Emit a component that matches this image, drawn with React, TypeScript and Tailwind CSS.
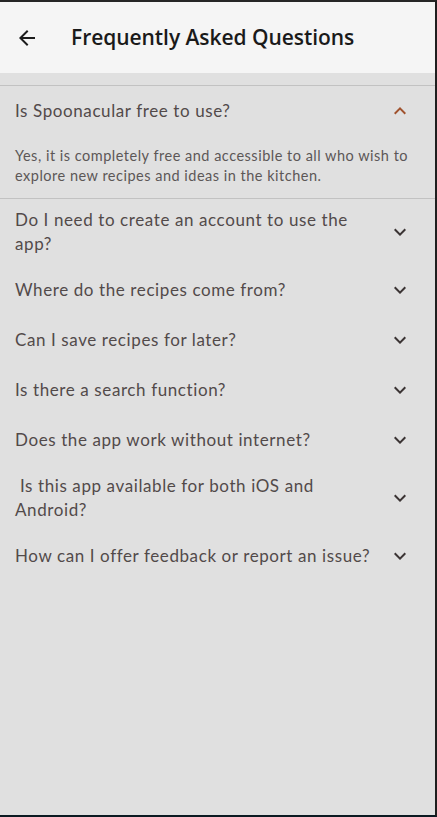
import React from "react";

const ExpandMore = ({ color = "#3b3434" }: { color?: string }) => (
  <svg width="24" height="24" viewBox="0 0 24 24" fill={color}>
    <path d="M16.59 8.59L12 13.17 7.41 8.59 6 10l6 6 6-6z" />
  </svg>
);

const ExpandLess = ({ color = "#a0522d" }: { color?: string }) => (
  <svg width="24" height="24" viewBox="0 0 24 24" fill={color}>
    <path d="M12 8l-6 6 1.41 1.41L12 10.83l4.59 4.58L18 14z" />
  </svg>
);

const questions = [
  "Do I need to create an account to use the app?",
  "Where do the recipes come from?",
  "Can I save recipes for later?",
  "Is there a search function?",
  "Does the app work without internet?",
  "\u00A0Is this app available for both iOS and Android?",
  "How can I offer feedback or report an issue?",
];

export default function App() {
  const body = { fontFamily: "Lato, 'Open Sans', sans-serif" };
  return (
    <div className="w-[437px] h-[817px] flex flex-col border-t-2 border-t-[#262626] border-r-2 border-r-[#1f1f1f] border-b-2 border-b-[#0b1a22] bg-[#e0e0e0] overflow-hidden">
      <div className="h-[71px] shrink-0 bg-[#f5f5f5] flex items-center pl-[15px]">
        <svg width="24" height="24" viewBox="0 0 24 24" fill="#1c1c1c">
          <path d="M20 11H7.83l5.59-5.59L12 4l-8 8 8 8 1.41-1.41L7.83 13H20v-2z" />
        </svg>
        <div
          className="ml-[32px] text-[21px] font-semibold text-[#1a1a1a] tracking-[-0.05px]"
          style={{ fontFamily: "'Open Sans', sans-serif" }}
        >
          Frequently Asked Questions
        </div>
      </div>
      <div className="h-[12px] shrink-0" />
      <div className="border-t border-b border-[#c2c2c2]" style={body}>
        <div className="h-[49px] flex items-center pl-[15px] pr-[23px]">
          <div className="flex-1 text-[17px] leading-[24px] text-[#524a4a] tracking-[0.6px]">
            Is Spoonacular free to use?
          </div>
          <div className="ml-[16px]">
            <ExpandLess />
          </div>
        </div>
        <div className="pl-[15px] pr-[20px] pt-[11px] pb-[12px] text-[14.5px] leading-[20px] text-[#5c5757] tracking-[0.5px]">
          Yes, it is completely free and accessible to all who wish to explore new recipes and ideas in the kitchen.
        </div>
      </div>
      <div style={body}>
        {questions.map((q) => (
          <div key={q} className="min-h-[50px] flex items-center pl-[15px] pr-[23px] py-[9px]">
            <div className="flex-1 text-[17px] leading-[24px] text-[#524a4a] tracking-[0.6px]">{q}</div>
            <div className="ml-[16px]">
              <ExpandMore />
            </div>
          </div>
        ))}
      </div>
    </div>
  );
}
